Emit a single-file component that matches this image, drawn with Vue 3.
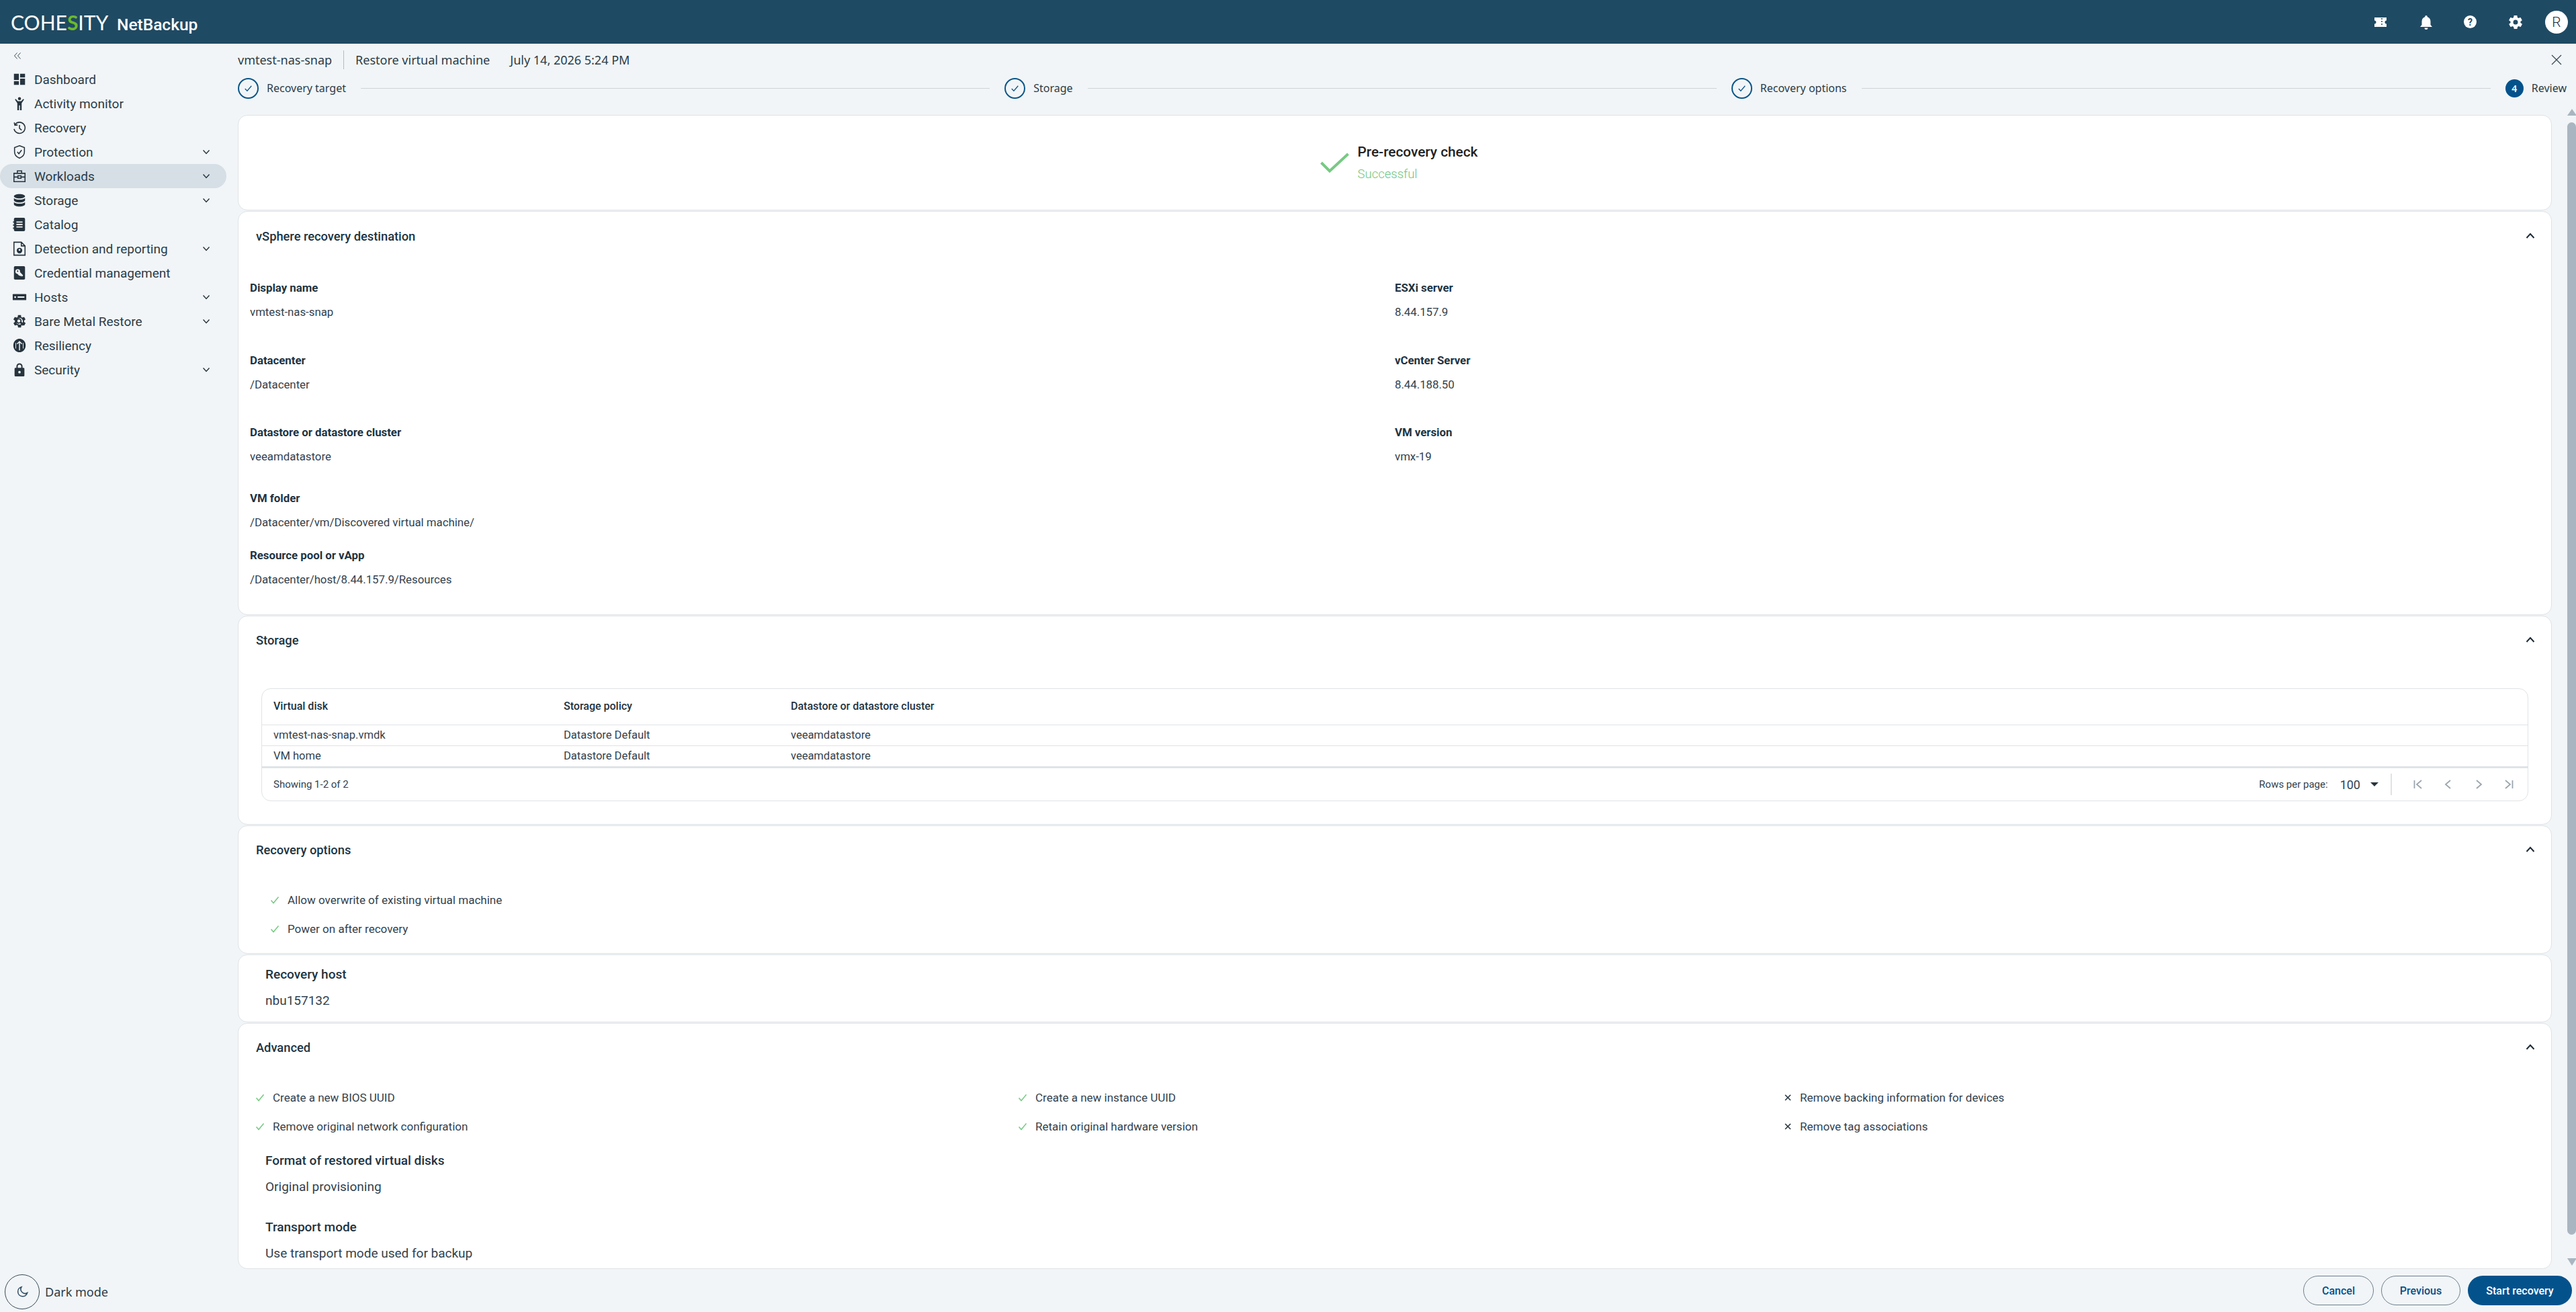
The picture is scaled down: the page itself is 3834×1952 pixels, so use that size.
<script setup>
const F = 'fill', S = 'stroke', W = 'white'
const gear = 'M19.400 13c.1-.3.1-.7.1-1s0-.7-.1-1l2.100-1.600c.2-.2.2-.4.1-.6l-2-3.500c-.1-.2-.4-.3-.6-.2l-2.500 1c-.5-.4-1.100-.7-1.700-1L14.500 2.400c0-.2-.2-.4-.5-.4h-4c-.3 0-.5.2-.5.4L9.100 5.100c-.6.3-1.200.6-1.700 1l-2.500-1c-.2-.1-.5 0-.6.2l-2 3.500c-.1.2-.1.5.1.6L4.600 11c-.1.3-.1.7-.1 1s0 .7.1 1l-2.100 1.600c-.2.2-.2.4-.1.6l2 3.500c.1.2.4.3.6.2l2.500-1c.5.4 1.100.7 1.700 1l.4 2.700c0 .2.2.4.5.4h4c.3 0 .5-.2.5-.4l.4-2.700c.6-.3 1.200-.6 1.700-1l2.500 1c.2.1.5 0 .6-.2l2-3.500c.1-.2.1-.5-.1-.6z'
const nav = [
  { label: 'Dashboard', paths: [[F, 'M3 3h8v10H3zM3 15h8v6H3zM13 11h8v10h-8zM13 3h8v6h-8z']] },
  { label: 'Activity monitor', paths: [[F, 'M12 1.500a2.500 2.500 0 1 1 0 5 2.500 2.500 0 0 1 0-5zM4.500 5.500l1.500-1 3.200 3.600h5.600L18 4.500l1.500 1-4 6V23h-2.700v-8h-1.600v8H8.500V11.500z']] },
  { label: 'Recovery', paths: [[S, 'M5 6.500A9 9 0 1 1 3.200 14M3.500 3.500l1 4.500 4.500-.5M12 7.500V13l3.500 3']] },
  { label: 'Protection', chevron: true, paths: [[S, 'M12 2l8 3v7c0 4.800-3.400 8.300-8 10-4.600-1.700-8-5.200-8-10V5zM8.500 12l2.500 3 4.500-6']] },
  { label: 'Workloads', chevron: true, active: true, paths: [[S, 'M3 7.500h18V21H3zM8.500 7.500V3.500h7v4M3 13.500h6.500M14.500 13.500H21M9.500 11.500h5v4h-5z']] },
  { label: 'Storage', chevron: true, paths: [[F, 'M12 2c5 0 9 1.500 9 3.500S17 9 12 9 3 7.500 3 5.500 7 2 12 2zM3 8.500C4.500 10.300 8 11 12 11s7.500-.7 9-2.500V12c0 2-4 3.500-9 3.500S3 14 3 12zM3 15c1.500 1.800 5 2.500 9 2.500s7.500-.7 9-2.500v3.500c0 2-4 3.500-9 3.500s-9-1.500-9-3.500z']] },
  { label: 'Catalog', paths: [[F, 'M5 1h14a2 2 0 0 1 2 2v18a2 2 0 0 1-2 2H5a2 2 0 0 1-2-2v-2H1.500v-2H3v-3H1.500v-2H3V9H1.500V7H3V3a2 2 0 0 1 2-2z'], [W, 'M7 7h10v2H7zM7 11h10v2H7zM7 15h10v2H7z']] },
  { label: 'Detection and reporting', chevron: true, paths: [[S, 'M3 1.500h12l6 6V22.500H3zM15 1.500v6h6'], [F, 'M12 10.500a4.500 4.500 0 1 1 0 9 4.500 4.500 0 0 1 0-9z'], [W, 'M12 12.500a1.500 1.500 0 1 1 0 3 1.500 1.500 0 0 1 0-3z']] },
  { label: 'Credential management', paths: [[F, 'M5 1h14a2 2 0 0 1 2 2v18a2 2 0 0 1-2 2H5a2 2 0 0 1-2-2V3a2 2 0 0 1 2-2z'], [W, 'M9.500 6a3.500 3.500 0 0 1 3.300 4.700l5.200 5.300-2 2-1.500-1.500-1 1-1.500-1.500-.5.5-2.800-3A3.500 3.500 0 0 1 9.500 6zm-.5 2a1.200 1.200 0 1 0 0 2.400A1.200 1.200 0 0 0 9 8z']] },
  { label: 'Hosts', chevron: true, paths: [[F, 'M2 7h20a1 1 0 0 1 1 1v8a1 1 0 0 1-1 1H2a1 1 0 0 1-1-1V8a1 1 0 0 1 1-1z'], [W, 'M5 10.500a1.500 1.500 0 1 1 0 3 1.500 1.500 0 0 1 0-3zM9 11h11v2.200H9z']] },
  { label: 'Bare Metal Restore', chevron: true, paths: [[F, gear], [W, 'M12 6.500a5.500 5.500 0 1 1 0 11 5.500 5.500 0 0 1 0-11z'], [F, 'M11 7a4.500 4.500 0 0 1 4.300 5.800l4.200 4.200-2.300 2.300-4.200-4.200A4.500 4.500 0 1 1 11 7zm0 2a2.500 2.500 0 1 0 0 5 2.500 2.500 0 0 0 0-5z']] },
  { label: 'Resiliency', paths: [[F, 'M12 1c5.500 0 10 4.500 10 11s-4.500 11-10 11S2 18.500 2 12 6.500 1 12 1z'], [W, 'M11.200 20V7.500L8.500 10 7.500 9 12 4.500 16.500 9l-1 1-2.700-2.500V20zM5.500 8v9h1V8zM17.500 8v9h1V8z']] },
  { label: 'Security', chevron: true, paths: [[F, 'M12 1.500a5 5 0 0 1 5 5V9h1.500a1.500 1.500 0 0 1 1.500 1.500v11a1.500 1.500 0 0 1-1.500 1.500h-13A1.500 1.500 0 0 1 4 21.500v-11A1.500 1.500 0 0 1 5.500 9H7V6.500a5 5 0 0 1 5-5zm0 2.200a2.800 2.800 0 0 0-2.800 2.800V9h5.600V6.500A2.800 2.800 0 0 0 12 3.700z'], [W, 'M12 14a2 2 0 1 1 0 4 2 2 0 0 1 0-4z']] },
]
const steps = [
  { label: 'Recovery target', done: true },
  { label: 'Storage', done: true },
  { label: 'Recovery options', done: true },
  { label: 'Review', n: 4 },
]
const details = [
  [{ k: 'Display name', v: 'vmtest-nas-snap' }, { k: 'ESXi server', v: '8.44.157.9' }],
  [{ k: 'Datacenter', v: '/Datacenter' }, { k: 'vCenter Server', v: '8.44.188.50' }],
  [{ k: 'Datastore or datastore cluster', v: 'veeamdatastore' }, { k: 'VM version', v: 'vmx-19' }],
]
const rows = [
  ['vmtest-nas-snap.vmdk', 'Datastore Default', 'veeamdatastore'],
  ['VM home', 'Datastore Default', 'veeamdatastore'],
]
const advanced = [
  { t: 'Create a new BIOS UUID', ok: true },
  { t: 'Create a new instance UUID', ok: true },
  { t: 'Remove backing information for devices', ok: false },
  { t: 'Remove original network configuration', ok: true },
  { t: 'Retain original hardware version', ok: true },
  { t: 'Remove tag associations', ok: false },
]
</script>

<template>
  <div class="app">
    <header class="topbar">
      <div class="logo"><span class="co">COHE<span class="s">S</span>ITY</span><span class="nb">NetBackup</span></div>
      <div class="top-icons">
        <svg class="ti" viewBox="0 0 24 24"><path fill="#fff" d="M3 5h18v4.500a2.500 2.500 0 0 0 0 5V19H3v-4.500a2.500 2.500 0 0 0 0-5z"/><path stroke="#1f4a63" stroke-width="1.500" stroke-dasharray="2 2" d="M14 6v12"/></svg>
        <svg class="ti" viewBox="0 0 24 24"><path fill="#fff" d="M12 2a1.800 1.800 0 0 1 1.800 1.800v.5C17 5.200 18.500 8 18.500 11v5l2.500 3H3l2.500-3v-5c0-3 1.500-5.800 4.700-6.700v-.5A1.800 1.800 0 0 1 12 2zM9.500 20.500h5a2.500 2.500 0 0 1-5 0z"/></svg>
        <span class="help">?</span>
        <svg class="ti" viewBox="0 0 24 24"><path fill="#fff" fill-rule="evenodd" :d="gear + 'M12 15.500a3.500 3.500 0 1 0 0-7 3.500 3.500 0 0 0 0 7z'"/></svg>
        <span class="avatar">R</span>
      </div>
    </header>

    <div class="body">
      <aside class="sidebar">
        <svg class="collapse" viewBox="0 0 12 12"><path d="M5.500 1.500L1.500 6l4 4.500M10.500 1.500L6.500 6l4 4.500"/></svg>
        <nav class="nav">
          <div v-for="item in nav" :key="item.label" class="nav-item" :class="{ active: item.active }">
            <svg class="nav-icon" viewBox="0 0 24 24">
              <path v-for="(p, i) in item.paths" :key="i" :class="p[0]" :d="p[1]" />
            </svg>
            <span class="nav-label">{{ item.label }}</span>
            <svg v-if="item.chevron" class="chev" viewBox="0 0 12 12"><path d="M1.500 3.500L6 8.500l4.500-5"/></svg>
          </div>
        </nav>
        <div class="dark">
          <span class="moon"><svg viewBox="0 0 24 24"><path d="M10 3.500a9 9 0 1 0 11 11A8 8 0 0 1 10 3.500z"/></svg></span>
          <span>Dark mode</span>
        </div>
      </aside>

      <main class="main">
        <div class="title-row">
          <span>vmtest-nas-snap</span><i class="vsep"></i><span>Restore virtual machine</span><span class="date">July 14, 2026 5:24 PM</span>
          <svg class="close" viewBox="0 0 16 16"><path d="M1 1l14 14M15 1L1 15"/></svg>
        </div>
        <div class="stepper">
          <template v-for="(s, i) in steps" :key="s.label">
            <div class="step">
              <span v-if="s.done" class="step-done"><svg viewBox="0 0 16 16"><path d="M3.500 8.500l3 3 6-7"/></svg></span>
              <span v-else class="step-num">{{ s.n }}</span>
              <span>{{ s.label }}</span>
            </div>
            <i v-if="i < 3" class="step-line"></i>
          </template>
        </div>

        <div class="scroll-wrap">
          <div class="panels">
            <section class="panel check-panel">
              <svg class="big-check" viewBox="0 0 43 31"><path d="M1.500 15l12.500 12.500L41.500 2"/></svg>
              <div>
                <div class="check-title">Pre-recovery check</div>
                <div class="check-sub">Successful</div>
              </div>
            </section>

            <section class="panel dest">
              <div class="ph"><h3>vSphere recovery destination</h3><svg class="up" viewBox="0 0 14 10"><path d="M1.500 8L7 2l5.500 6"/></svg></div>
              <div class="grid-rows">
                <div v-for="(r, i) in details" :key="i" class="drow">
                  <div v-for="c in r" :key="c.k" class="dcell"><div class="dk">{{ c.k }}</div><div class="dv">{{ c.v }}</div></div>
                </div>
                <div class="dcell s1"><div class="dk">VM folder</div><div class="dv">/Datacenter/vm/Discovered virtual machine/</div></div>
                <div class="dcell s2"><div class="dk">Resource pool or vApp</div><div class="dv">/Datacenter/host/8.44.157.9/Resources</div></div>
              </div>
            </section>

            <section class="panel storage">
              <div class="ph"><h3>Storage</h3><svg class="up" viewBox="0 0 14 10"><path d="M1.500 8L7 2l5.500 6"/></svg></div>
              <div class="tbl">
                <div class="tr thead"><span>Virtual disk</span><span>Storage policy</span><span>Datastore or datastore cluster</span></div>
                <div v-for="(r, i) in rows" :key="i" class="tr tbody" :class="{ last: i === 1 }"><span v-for="c in r" :key="c">{{ c }}</span></div>
                <div class="tfoot">
                  <span class="showing">Showing 1-2 of 2</span>
                  <span class="rpp">Rows per page:</span>
                  <span class="rpv">100</span>
                  <i class="caret"></i>
                  <i class="tsep"></i>
                  <div class="pager">
                    <svg viewBox="0 0 16 16"><path d="M2.500 2v12M13 2L6 8l7 6"/></svg>
                    <svg viewBox="0 0 16 16"><path d="M11 2L4 8l7 6"/></svg>
                    <svg viewBox="0 0 16 16"><path d="M5 2l7 6-7 6"/></svg>
                    <svg viewBox="0 0 16 16"><path d="M3 2l7 6-7 6M13.500 2v12"/></svg>
                  </div>
                </div>
              </div>
            </section>

            <section class="panel options">
              <div class="ph"><h3>Recovery options</h3><svg class="up" viewBox="0 0 14 10"><path d="M1.500 8L7 2l5.500 6"/></svg></div>
              <div class="opt"><svg class="ck" viewBox="0 0 14 12"><path d="M1.500 6.500l3.500 4 7.500-9"/></svg>Allow overwrite of existing virtual machine</div>
              <div class="opt"><svg class="ck" viewBox="0 0 14 12"><path d="M1.500 6.500l3.500 4 7.500-9"/></svg>Power on after recovery</div>
            </section>

            <section class="panel host">
              <div class="sub-k">Recovery host</div>
              <div class="sub-v">nbu157132</div>
            </section>

            <section class="panel adv">
              <div class="ph"><h3>Advanced</h3><svg class="up" viewBox="0 0 14 10"><path d="M1.500 8L7 2l5.500 6"/></svg></div>
              <div class="adv-grid">
                <div v-for="a in advanced" :key="a.t" class="adv-item">
                  <svg v-if="a.ok" class="ck" viewBox="0 0 14 12"><path d="M1.500 6.500l3.500 4 7.500-9"/></svg>
                  <svg v-else class="xk" viewBox="0 0 12 12"><path d="M2 2l8 8M10 2l-8 8"/></svg>
                  {{ a.t }}
                </div>
              </div>
              <div class="adv-block first">
                <div class="sub-k">Format of restored virtual disks</div>
                <div class="sub-v">Original provisioning</div>
              </div>
              <div class="adv-block">
                <div class="sub-k">Transport mode</div>
                <div class="sub-v">Use transport mode used for backup</div>
              </div>
            </section>
          </div>
          <div class="scrollbar">
            <i class="arrow-up"></i>
            <i class="thumb"></i>
            <i class="arrow-down"></i>
          </div>
        </div>

        <footer class="footer">
          <button class="btn ghost cancel">Cancel</button>
          <button class="btn ghost prev">Previous</button>
          <button class="btn primary">Start recovery</button>
        </footer>
      </main>
    </div>
  </div>
</template>

<style>
html, body { margin: 0; background: #f1f5f7; }
</style>

<style scoped>
* { box-sizing: border-box; }
.app { width: 3834px; height: 1952px; display: flex; flex-direction: column; overflow: hidden; background: #f1f5f7; font-family: Roboto, sans-serif; color: #1d3342; }
.topbar { height: 65px; background: #1f4a63; display: flex; align-items: center; justify-content: space-between; padding: 0 12px 0 16px; color: #fff; flex: none; }
.logo { display: flex; align-items: baseline; }
.co { font-family: Lato, sans-serif; font-size: 30px; font-weight: 400; width: 158px; }
.s { color: #6cb92e; font-weight: 700; }
.nb { font-size: 24.500px; font-weight: 500; }
.top-icons { display: flex; align-items: center; }
.ti { width: 24px; height: 24px; margin-right: 44px; }
.help { width: 19px; height: 19px; border-radius: 50%; background: #fff; color: #1f4a63; font-size: 14px; font-weight: 700; display: flex; align-items: center; justify-content: center; margin-right: 46px; }
.avatar { width: 34px; height: 34px; border-radius: 50%; background: #fff; color: #1d2b36; font-size: 21px; font-weight: 300; display: flex; align-items: center; justify-content: center; margin-left: -12px; }

.body { flex: 1; display: flex; min-height: 0; }
.sidebar { width: 340px; flex: none; display: flex; flex-direction: column; padding-top: 12px; }
.collapse { width: 12px; height: 12px; margin: 0 0 11px 20px; fill: none; stroke: #3a4b57; stroke-width: 1; flex: none; }
.nav { display: flex; flex-direction: column; flex: 1; }
.nav-item { height: 36px; display: flex; align-items: center; padding-left: 18px; width: 337px; border-radius: 18px; font-size: 19px; color: #2c3c48; }
.nav-item.active { background: #d6dfe6; }
.nav-icon { width: 22px; height: 22px; margin-right: 11px; flex: none; }
.fill { fill: #27343e; }
.white { fill: #f1f5f7; }
.stroke { fill: none; stroke: #27343e; stroke-width: 1.700; }
.nav-label { flex: 1; }
.chev { width: 12px; height: 12px; fill: none; stroke: #27343e; stroke-width: 1.400; margin-right: 24px; }
.dark { display: flex; align-items: center; gap: 8px; padding: 0 0 5px 7px; font-family: "Noto Sans", sans-serif; font-size: 18px; color: #2c3c48; height: 56px; flex: none; }
.moon { width: 52px; height: 52px; border: 1px solid #3a4b57; border-radius: 50%; display: flex; align-items: center; justify-content: center; }
.moon svg { width: 19px; height: 19px; fill: none; stroke: #33506a; stroke-width: 2; }

.main { flex: 1; min-width: 0; display: flex; flex-direction: column; padding-left: 14px; }
.title-row { height: 33px; margin-top: 7px; display: flex; align-items: center; font-family: "Noto Sans", sans-serif; font-size: 18px; color: #2c3c48; flex: none; padding-right: 21px; }
.vsep { width: 1px; height: 28px; background: #b3bcc2; margin: 0 17px; }
.date { margin-left: 30px; }
.close { width: 16px; height: 16px; margin-left: auto; fill: none; stroke: #3a4b57; stroke-width: 1.300; }
.stepper { height: 32px; margin-top: 10px; display: flex; align-items: center; flex: none; padding-right: 14px; font-family: "Noto Sans", sans-serif; font-size: 16px; color: #2c3c48; }
.step { display: flex; align-items: center; gap: 12px; flex: none; }
.step-done { width: 31px; height: 31px; border-radius: 50%; border: 2px solid #0b5688; display: flex; align-items: center; justify-content: center; }
.step-done svg { width: 17px; height: 17px; fill: none; stroke: #0b5688; stroke-width: 1.200; }
.step-num { width: 27px; height: 27px; border-radius: 50%; background: #04528c; color: #fff; font-size: 14px; font-weight: 600; display: flex; align-items: center; justify-content: center; }
.step-line { flex: 1; height: 1px; background: #ccd3d8; margin: 0 22px; }
.scroll-wrap { flex: 1; min-height: 0; display: flex; margin-top: 13px; }
.panels { width: 3444px; flex: none; padding-top: 11px; display: flex; flex-direction: column; gap: 1px; }
.panel { background: #fff; border: 1px solid #dfe3e6; border-radius: 14px; flex: none; }
.scrollbar { width: 13px; margin-left: 23px; display: flex; flex-direction: column; align-items: center; padding-top: 2px; flex: none; }
.arrow-up { border-left: 7px solid transparent; border-right: 7px solid transparent; border-bottom: 10px solid #a9b6c1; flex: none; }
.thumb { width: 13px; height: 1655px; margin-top: 10px; border-radius: 7px; background: #a9b6c1; flex: none; }
.arrow-down { margin-top: 35px; border-left: 7px solid transparent; border-right: 7px solid transparent; border-top: 11px solid #a9b6c1; flex: none; }

.check-panel { height: 142px; display: flex; justify-content: center; align-items: flex-start; padding: 39px 0 0 12px; gap: 13px; }
.big-check { width: 43px; height: 31px; margin-top: 16px; fill: none; stroke: #77c983; stroke-width: 4; }
.check-title { font-size: 20.800px; font-weight: 500; color: #222; line-height: 30px; }
.check-sub { font-size: 18.500px; font-weight: 300; color: #6fc67d; line-height: 24px; margin-top: 6px; }

.ph { display: flex; align-items: center; justify-content: space-between; height: 70px; padding: 0 24px 0 26px; }
.dest .ph { height: 72px; }
h3 { margin: 0; font-size: 18.300px; font-weight: 500; color: #1d3342; }
.up { width: 14px; height: 10px; fill: none; stroke: #1d2b36; stroke-width: 2; }

.dest { height: 601px; }
.grid-rows { padding: 31px 0 0 17px; display: flex; flex-direction: column; }
.drow { display: flex; }
.drow .dcell { height: 107.500px; }
.drow .dcell:first-child { width: 1704px; }
.dk { font-size: 16.800px; font-weight: 700; color: #1d3342; line-height: 20px; }
.dv { font-size: 16.800px; color: #33424e; line-height: 20px; margin-top: 16px; }
.s1 { margin-top: -10px; height: 85px; }
.s2 { height: 70px; }

.storage { height: 311px; }
.tbl { margin: 37px 34px 0; border: 1px solid #dfe3e6; border-radius: 14px; height: 168px; }
.tr { display: grid; grid-template-columns: 432px 338px 1fr; padding-left: 17px; border-bottom: 1px solid #dfe3e6; font-size: 16px; align-items: center; }
.thead { height: 54px; font-weight: 500; padding-bottom: 2px; }
.tbody { height: 31px; color: #33424e; padding-bottom: 2px; font-size: 16.500px; }
.tbody.last { height: 33px; border-bottom-width: 3px; }
.tfoot { height: 48px; display: flex; align-items: center; padding: 0 20px 0 17px; font-size: 15px; color: #33424e; }
.showing { flex: 1; }
.rpp { font-size: 15px; }
.rpv { font-size: 18px; margin-left: 18px; }
.caret { border-left: 6px solid transparent; border-right: 6px solid transparent; border-top: 6px solid #27343e; margin-left: 15px; }
.tsep { width: 2px; height: 32px; background: #dfe3e6; margin-left: 18px; }
.pager { display: flex; gap: 29px; margin-left: 31px; }
.pager svg { width: 16px; height: 16px; fill: none; stroke: #9aa6af; stroke-width: 1.800; }

.options { height: 191px; }
.opt { display: flex; align-items: center; margin-left: 47px; height: 43px; font-size: 17px; color: #33424e; }
.ph + .opt { margin-top: 18px; }
.ck { width: 14px; height: 12px; fill: none; stroke: #77c983; stroke-width: 1.500; margin-right: 12px; flex: none; }
.xk { width: 12px; height: 12px; fill: none; stroke: #27343e; stroke-width: 1.600; margin-right: 12px; flex: none; }

.host { height: 101px; padding: 17px 0 0 40px; }
.sub-k { font-size: 19px; font-weight: 500; line-height: 24px; color: #1d3342; }
.sub-v { font-size: 19px; line-height: 24px; margin-top: 15px; color: #33424e; }

.adv { height: 366px; }
.adv-grid { display: grid; grid-template-columns: 1135px 1140px 1fr; margin: 18px 0 0 25px; grid-auto-rows: 43px; align-items: center; }
.adv-item { display: flex; align-items: center; font-size: 17px; color: #33424e; }
.adv-block { margin-left: 40px; height: 99px; }
.adv-block.first { margin-top: 18px; }

.footer { height: 64px; flex: none; display: flex; justify-content: flex-end; align-items: center; gap: 11px; padding: 0 6px 0 0; }
.btn { height: 44px; border-radius: 22px; font-family: Roboto, sans-serif; font-size: 16px; font-weight: 500; padding: 0; cursor: pointer; }
.ghost { background: transparent; border: 1px solid #6e7f8d; color: #05508a; }
.cancel { width: 105px; }
.prev { width: 118px; }
.primary { width: 155px; background: #04528c; border: none; color: #fff; }
</style>
